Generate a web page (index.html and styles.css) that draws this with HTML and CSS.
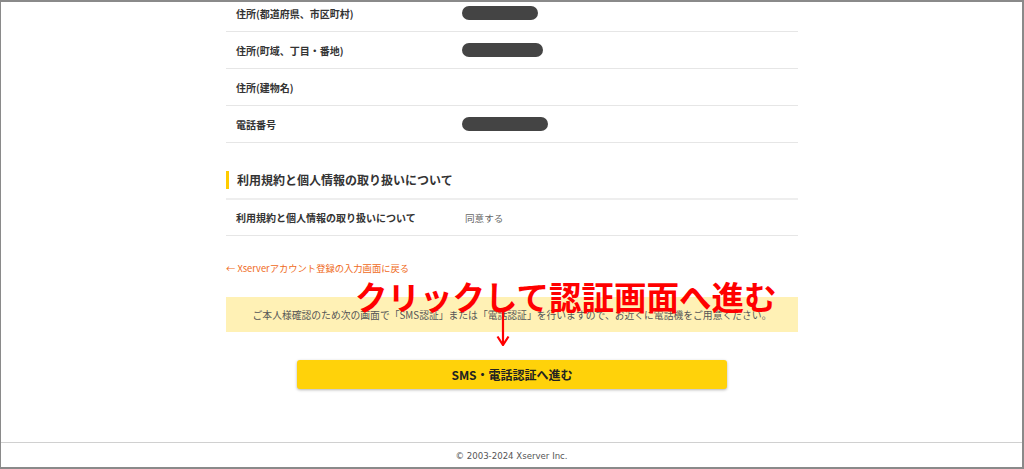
FILE: index.html
```html
<!DOCTYPE html>
<html lang="ja">
<head>
<meta charset="utf-8">
<title>確認画面</title>
<link rel="stylesheet" href="styles.css">
</head>
<body>
<div class="frame">
  <main class="page">
    <div class="content">
      <div class="table">
        <div class="row"><div class="label">住所(都道府県、市区町村)</div><div class="value"><span class="mask" style="width:76px"></span></div></div>
        <div class="row"><div class="label">住所(町域、丁目・番地)</div><div class="value"><span class="mask" style="width:81px"></span></div></div>
        <div class="row"><div class="label">住所(建物名)</div><div class="value"></div></div>
        <div class="row"><div class="label">電話番号</div><div class="value"><span class="mask" style="width:86px"></span></div></div>
      </div>

      <h2 class="section-title">利用規約と個人情報の取り扱いについて</h2>
      <div class="table table-agree">
        <div class="row"><div class="label">利用規約と個人情報の取り扱いについて</div><div class="value text">同意する</div></div>
      </div>

      <a class="back-link" href="#">← Xserverアカウント登録の入力画面に戻る</a>

      <div class="notice">ご本人様確認のため次の画面で「SMS認証」または「電話認証」を行いますので、お近くに電話機をご用意ください。</div>

      <div class="actions">
        <button class="submit" type="button">SMS・電話認証へ進む</button>
      </div>

      <div class="annotation">クリックして認証画面へ進む</div>
      <svg class="arrow" width="14" height="38" viewBox="0 0 14 38" aria-hidden="true">
        <line x1="7" y1="0" x2="7" y2="35" stroke="#f00" stroke-width="2.2"/>
        <path d="M1.5 28.5 L7 37 L12.5 28.5" fill="none" stroke="#f00" stroke-width="2.2"/>
      </svg>
    </div>
  </main>
  <footer class="footer">© 2003-2024 Xserver Inc.</footer>
</div>
</body>
</html>
```

FILE: styles.css
```css
* { box-sizing: border-box; }
html, body { margin: 0; padding: 0; }
body {
  font-family: "Noto Sans", "Noto Sans CJK JP", sans-serif;
  color: #333;
  background: #fff;
}
.frame {
  width: 1024px;
  height: 469px;
  border-top: 2px solid #8a8a8a;
  border-left: 1px solid #8a8a8a;
  border-right: 2px solid #8a8a8a;
  border-bottom: 2px solid #8a8a8a;
  overflow: hidden;
  display: flex;
  flex-direction: column;
}
.page {
  flex: 1;
  overflow: hidden;
}
.content {
  position: relative;
  width: 572px;
  margin: -7px 0 0 225px;
}
.table { display: flex; flex-direction: column; }
.row {
  display: flex;
  align-items: center;
  height: 37px;
  border-bottom: 1px solid #e6e6e6;
}
.label {
  width: 236px;
  padding-left: 10px;
  font-size: 10px;
  font-weight: 700;
  color: #333;
  font-family: "Noto Sans CJK JP", sans-serif;
}
.value { display: flex; align-items: center; }
.value.text {
  padding-left: 3px;
  font-size: 9.6px;
  color: #666;
  font-family: "Noto Sans CJK JP", sans-serif;
}
.mask {
  display: block;
  height: 14px;
  border-radius: 7px;
  background: #444;
}
.section-title {
  margin: 28px 0 0;
  padding: 0 0 0 8px;
  border-left: 3px solid #ffcc00;
  font-size: 12px;
  font-weight: 700;
  line-height: 18px;
  color: #333;
  font-family: "Noto Sans CJK JP", sans-serif;
}
.table-agree {
  margin-top: 9px;
  border-top: 2px solid #eeeeee;
}
.table-agree .row { height: 36px; }
.back-link {
  display: block;
  margin-top: 25px;
  font-size: 9.3px;
  line-height: 14px;
  color: #ef6a22;
  text-decoration: none;
  font-family: "Noto Sans CJK JP", sans-serif;
}
.notice {
  margin-top: 22px;
  height: 35px;
  display: flex;
  align-items: center;
  justify-content: center;
  background: #fff1b5;
  font-size: 9.8px;
  color: #555;
  font-family: "Noto Sans CJK JP", sans-serif;
}
.actions {
  display: flex;
  justify-content: center;
  margin-top: 28px;
}
.submit {
  width: 430px;
  height: 29px;
  border: none;
  border-radius: 3px;
  background: #ffd20a;
  box-shadow: 0 1px 3px rgba(0,0,0,0.3);
  font-family: "Noto Sans CJK JP", sans-serif;
  font-size: 12px;
  font-weight: 700;
  color: #222;
}
.annotation {
  position: absolute;
  left: 129px;
  top: 283px;
  font-family: "Noto Sans CJK JP", sans-serif;
  font-size: 32.5px;
  font-weight: 700;
  line-height: 36px;
  color: #ff0000;
  white-space: nowrap;
}
.arrow {
  position: absolute;
  left: 270px;
  top: 313px;
}
.footer {
  height: 25px;
  border-top: 1px solid #d0d0d0;
  display: flex;
  align-items: center;
  justify-content: center;
  padding-top: 1px;
  font-family: "DejaVu Sans", sans-serif;
  font-size: 8.6px;
  color: #555;
}
```
